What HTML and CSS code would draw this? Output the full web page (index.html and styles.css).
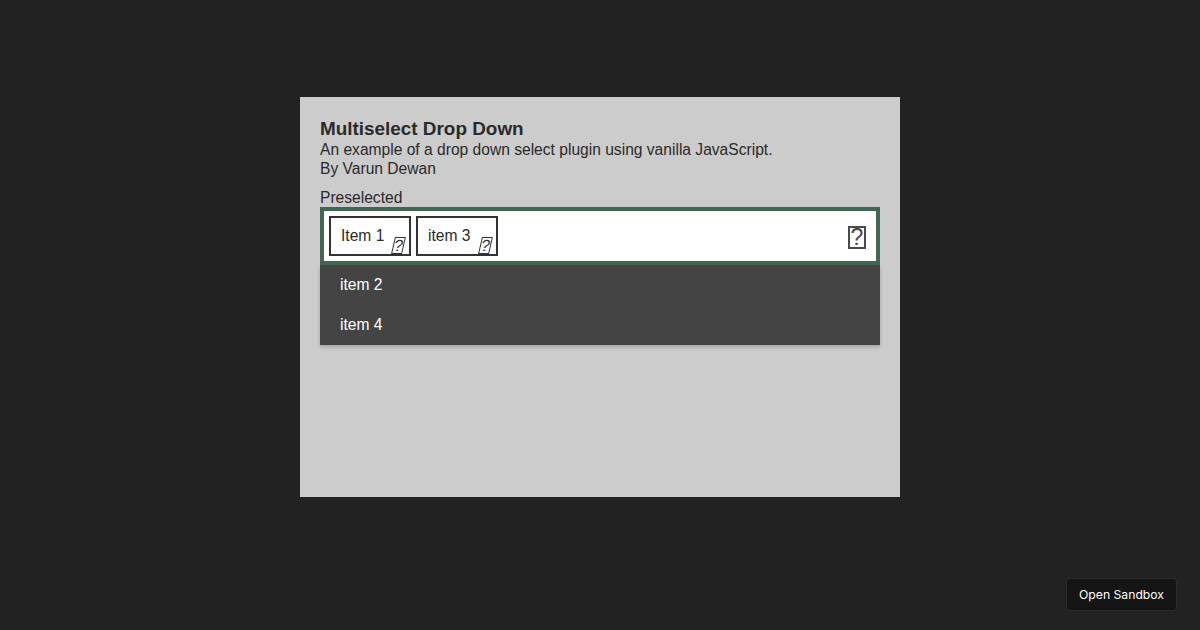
FILE: index.html
```html
<!DOCTYPE html>
<html lang="en">
<head>
<meta charset="utf-8">
<title>Multiselect Drop Down</title>
<link rel="stylesheet" href="styles.css">
</head>
<body>
<main class="card">
  <h1 class="title">Multiselect Drop Down</h1>
  <p class="line">An example of a drop down select plugin using vanilla JavaScript.</p>
  <p class="line">By Varun Dewan</p>
  <div class="field">
    <label class="label">Preselected</label>
    <div class="select">
      <div class="chips">
        <span class="chip">Item 1<i class="chip-x">?</i></span>
        <span class="chip">item 3<i class="chip-x">?</i></span>
      </div>
      <span class="arrow">?</span>
    </div>
    <ul class="menu">
      <li class="option">item 2</li>
      <li class="option">item 4</li>
    </ul>
  </div>
</main>
<a class="sandbox">Open Sandbox</a>
</body>
</html>
```
FILE: styles.css
```css
* { box-sizing: border-box; }
html, body { height: 100%; }
body {
  margin: 0;
  background: #222222;
  font-family: "Liberation Sans", Arial, sans-serif;
  color: #2a2a2a;
  display: flex;
  align-items: flex-start;
  justify-content: center;
  padding-top: 97px;
  overflow: hidden;
}
.card {
  width: 600px;
  height: 400px;
  background: #cccccc;
  padding: 21px 20px 20px;
  font-size: 15.6px;
  line-height: 19px;
}
.title {
  margin: 0;
  font-size: 18.9px;
  line-height: 22px;
  font-weight: bold;
}
.line { margin: 0; }
.field { margin-top: 10px; }
.label { display: block; height: 19px; line-height: 19px; }
.select {
  height: 58px;
  border: 4px solid #426654;
  background: #fff;
  display: flex;
  align-items: center;
  justify-content: space-between;
  padding: 0 10px 0 5px;
}
.chips { display: flex; gap: 5px; }
.chip {
  position: relative;
  display: block;
  width: 82px;
  height: 40px;
  border: 2px solid #333;
  padding-left: 10px;
  line-height: 35px;
  white-space: nowrap;
}
.chip-x {
  position: absolute;
  right: 5px;
  bottom: 0;
  width: 11px;
  height: 17px;
  border: 1px solid #333;
  transform: skewX(-13deg);
  font-size: 16px;
  font-style: normal;
  line-height: 15px;
  text-align: center;
  color: #333;
}
.arrow {
  align-self: flex-start;
  margin-top: 15px;
  width: 18px;
  height: 23px;
  border: 2px solid #4a4a4a;
  font-size: 23px;
  line-height: 19px;
  text-align: center;
  color: #444;
}
.menu {
  list-style: none;
  margin: 0;
  padding: 0;
  background: #444;
  box-shadow: 0 2px 4px rgba(0,0,0,.2);
}
.option {
  height: 40px;
  padding-left: 20px;
  color: #fff;
  line-height: 40px;
}
.sandbox {
  position: absolute;
  right: 23px;
  bottom: 19px;
  width: 111px;
  height: 33px;
  background: #151515;
  border: 1px solid #2c2c2c;
  border-radius: 4px;
  color: #fff;
  font: 12.2px/31px Inter, sans-serif;
  text-align: center;
}
```
